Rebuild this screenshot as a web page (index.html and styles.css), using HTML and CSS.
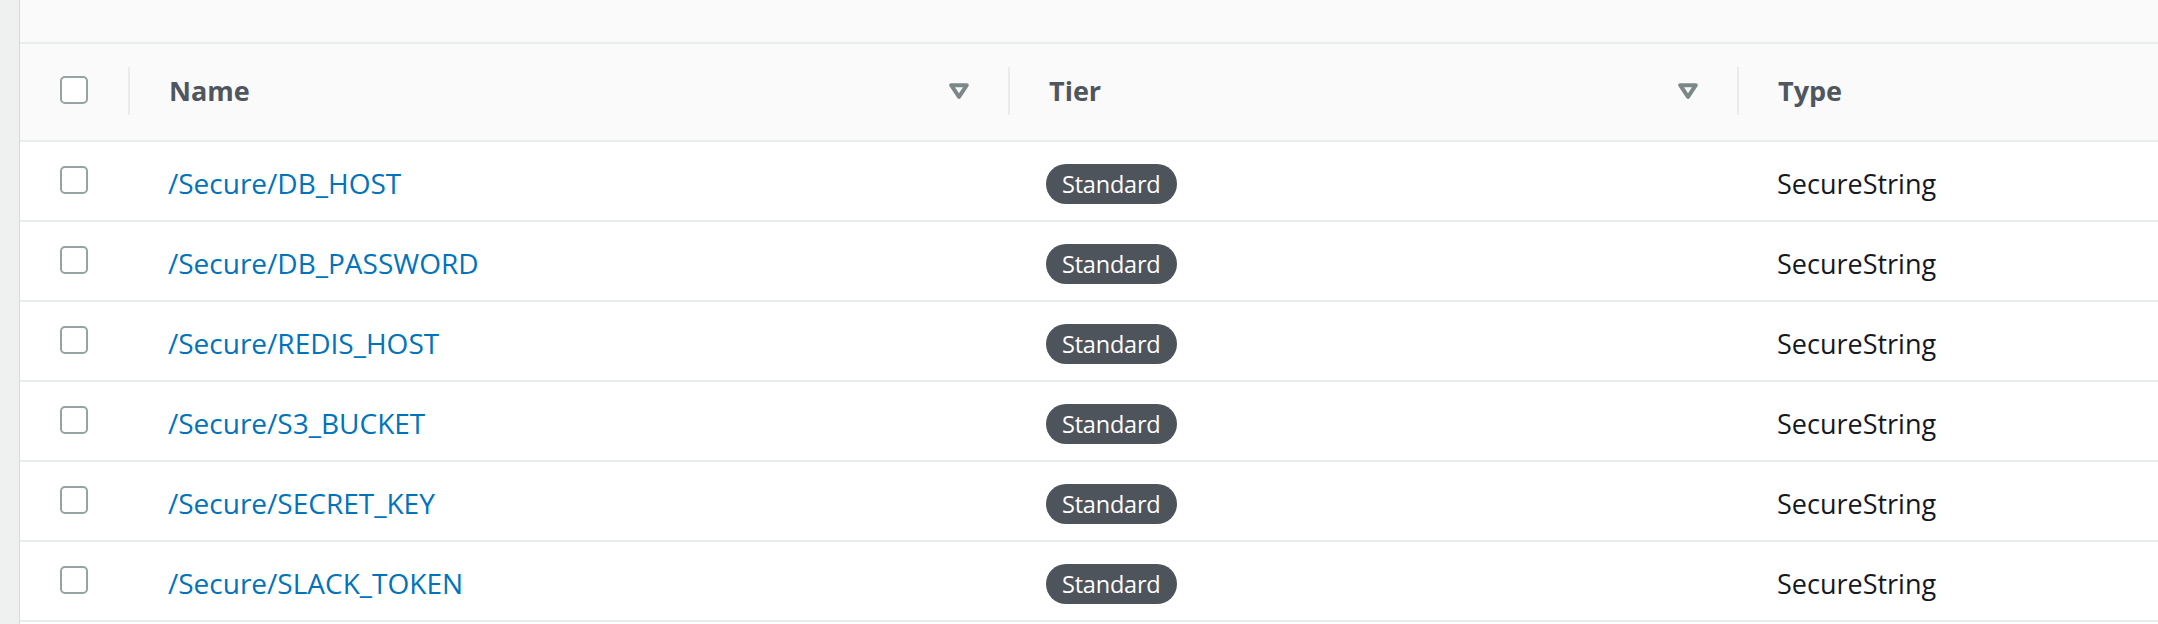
FILE: index.html
```html
<!DOCTYPE html>
<html lang="en">
<head>
<meta charset="utf-8">
<title>Parameters</title>
<link rel="stylesheet" href="styles.css">
</head>
<body>
<div class="page">
  <aside class="side-strip"></aside>
  <main class="main">
    <div class="top-band"></div>
    <div class="table">
      <div class="row head">
        <div class="cell check-cell"><span class="checkbox"></span></div>
        <div class="cell hcell"><span class="htext">Name</span><svg class="sort" viewBox="0 0 20 16" width="20" height="16"><path d="M2.2 2.2 L17.8 2.2 L10 13.8 Z" fill="none" stroke="#7b8888" stroke-width="4" stroke-linejoin="round"/></svg></div>
        <div class="cell hcell"><span class="htext">Tier</span><svg class="sort" viewBox="0 0 20 16" width="20" height="16"><path d="M2.2 2.2 L17.8 2.2 L10 13.8 Z" fill="none" stroke="#7b8888" stroke-width="4" stroke-linejoin="round"/></svg></div>
        <div class="cell hcell"><span class="htext">Type</span></div>
      </div>

      <div class="row">
        <div class="cell check-cell"><span class="checkbox"></span></div>
        <div class="cell"><a class="link" href="#">/Secure/DB_HOST</a></div>
        <div class="cell"><span class="badge">Standard</span></div>
        <div class="cell"><span class="type">SecureString</span></div>
      </div>
      <div class="row">
        <div class="cell check-cell"><span class="checkbox"></span></div>
        <div class="cell"><a class="link" href="#">/Secure/DB_PASSWORD</a></div>
        <div class="cell"><span class="badge">Standard</span></div>
        <div class="cell"><span class="type">SecureString</span></div>
      </div>
      <div class="row">
        <div class="cell check-cell"><span class="checkbox"></span></div>
        <div class="cell"><a class="link" href="#">/Secure/REDIS_HOST</a></div>
        <div class="cell"><span class="badge">Standard</span></div>
        <div class="cell"><span class="type">SecureString</span></div>
      </div>
      <div class="row">
        <div class="cell check-cell"><span class="checkbox"></span></div>
        <div class="cell"><a class="link" href="#">/Secure/S3_BUCKET</a></div>
        <div class="cell"><span class="badge">Standard</span></div>
        <div class="cell"><span class="type">SecureString</span></div>
      </div>
      <div class="row">
        <div class="cell check-cell"><span class="checkbox"></span></div>
        <div class="cell"><a class="link" href="#">/Secure/SECRET_KEY</a></div>
        <div class="cell"><span class="badge">Standard</span></div>
        <div class="cell"><span class="type">SecureString</span></div>
      </div>
      <div class="row">
        <div class="cell check-cell"><span class="checkbox"></span></div>
        <div class="cell"><a class="link" href="#">/Secure/SLACK_TOKEN</a></div>
        <div class="cell"><span class="badge">Standard</span></div>
        <div class="cell"><span class="type">SecureString</span></div>
      </div>
    </div>
  </main>
</div>
</body>
</html>
```

FILE: styles.css
```css
* { box-sizing: border-box; }

html, body {
  margin: 0;
  padding: 0;
  background: #ffffff;
  font-family: "Open Sans", "Noto Sans", "Liberation Sans", sans-serif;
  overflow: hidden;
}

.page {
  display: flex;
  min-height: 624px;
}

.side-strip {
  width: 20px;
  flex: 0 0 20px;
  background: #eff0f0;
  border-right: 1px solid #d5dbdb;
}

.main {
  flex: 1;
  min-width: 0;
  display: flex;
  flex-direction: column;
}

.top-band {
  height: 44px;
  background: #fafafa;
  border-bottom: 2px solid #eaeded;
}

.table {
  display: flex;
  flex-direction: column;
}

.row {
  display: grid;
  grid-template-columns: 108px 880px 729px 1fr;
  height: 80px;
  background: #ffffff;
  border-bottom: 2px solid #eaeded;
}

.row.head {
  height: 98px;
  background: #fafafa;
}

.cell {
  display: flex;
  align-items: center;
  padding-left: 40px;
  padding-top: 4px;
  min-width: 0;
  white-space: nowrap;
}

.check-cell {
  padding-top: 0;
  padding-bottom: 3px;
}

.head .cell { padding-top: 0; padding-bottom: 3px; }
.head .check-cell { padding-top: 0; padding-bottom: 5px; }

.checkbox {
  display: block;
  width: 28px;
  height: 28px;
  border: 2.5px solid #97a2a2;
  border-radius: 5px;
  background: #ffffff;
}

.hcell {
  padding-left: 0;
  padding-right: 39px;
}

.hcell::before {
  content: "";
  flex: 0 0 2px;
  width: 2px;
  height: 48px;
  margin-right: 39px;
  background: #e9ebed;
}

.htext {
  font-weight: 700;
  font-size: 27px;
  color: #4f565e;
}

.sort {
  margin-left: auto;
  display: block;
  margin-top: 0;
}

.link {
  font-size: 28px;
  color: #0073bb;
  text-decoration: none;
}

.type {
  font-size: 27px;
  color: #16191f;
}

.badge {
  display: inline-block;
  height: 40px;
  line-height: 40px;
  padding: 0 16px;
  border-radius: 20px;
  background: #4e545b;
  color: #ffffff;
  font-size: 23.5px;
  letter-spacing: -0.2px;
  margin-left: -2px;
  margin-top: 2px;
}
```
